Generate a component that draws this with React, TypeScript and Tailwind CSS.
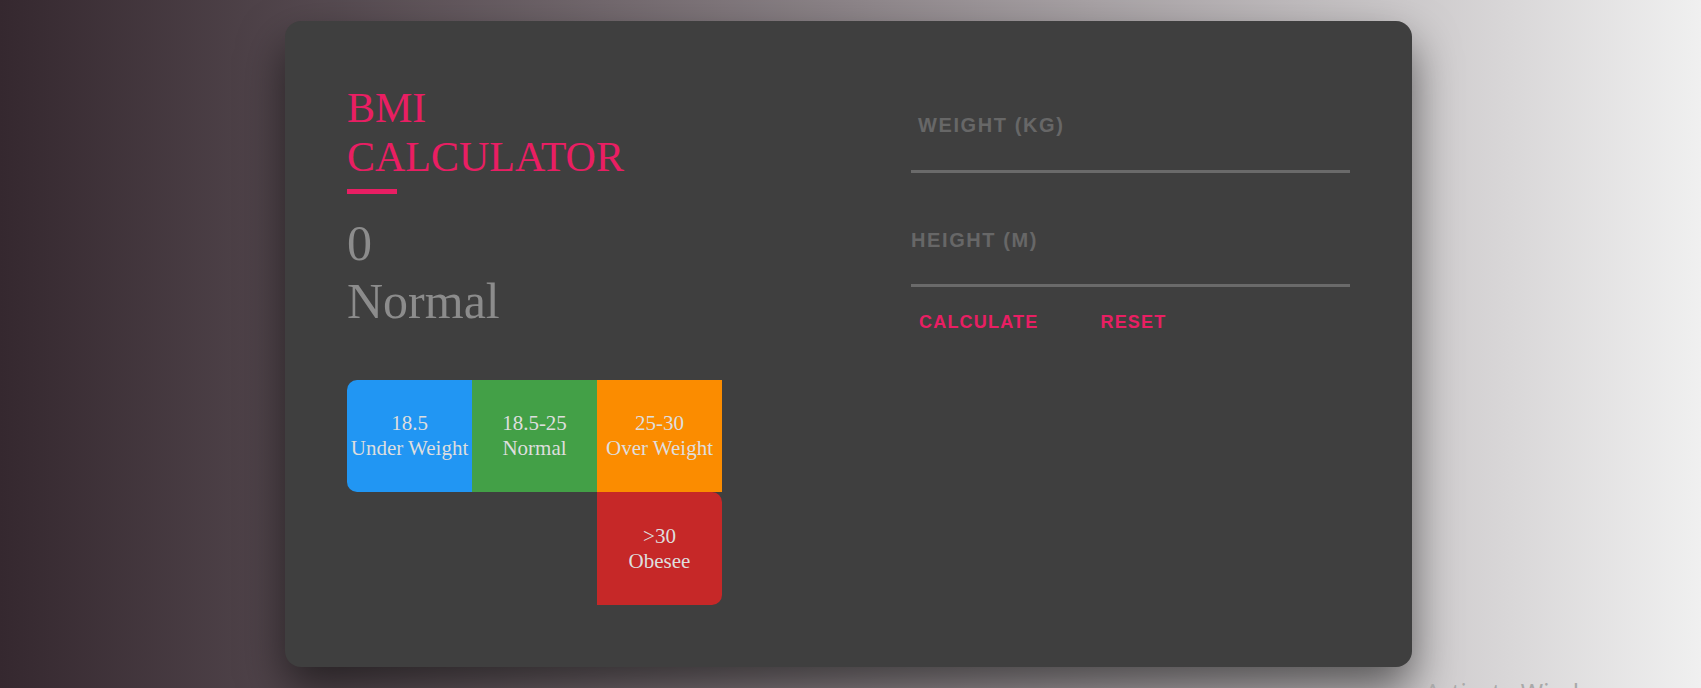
import { useState } from 'react';

const ranges = [
  { range: '18.5', label: 'Under Weight', className: 'bg-[#2196f3] rounded-l-[10px]' },
  { range: '18.5-25', label: 'Normal', className: 'bg-[#43a047]' },
  { range: '25-30', label: 'Over Weight', className: 'bg-[#fb8c00]' },
  { range: '>30', label: 'Obesee', className: 'bg-[#c62828] rounded-r-[10px] col-start-3 h-[113px]' },
];

export default function App() {
  const [weight, setWeight] = useState('');
  const [height, setHeight] = useState('');
  const [bmi, setBmi] = useState(0);
  const [status, setStatus] = useState('Normal');

  const calculate = () => {
    const w = parseFloat(weight);
    const h = parseFloat(height);
    if (!w || !h) return;
    const value = Math.round((w / (h * h)) * 10) / 10;
    setBmi(value);
    if (value < 18.5) setStatus('Under Weight');
    else if (value < 25) setStatus('Normal');
    else if (value < 30) setStatus('Over Weight');
    else setStatus('Obesee');
  };

  const reset = () => {
    setWeight('');
    setHeight('');
    setBmi(0);
    setStatus('Normal');
  };

  return (
    <div className="relative h-[688px] overflow-hidden bg-gradient-to-r from-[#35282f] to-[#f0f0f0] flex items-center justify-center pr-[4px]">
      <div className="w-[1127px] h-[646px] bg-[#3f3f3f] rounded-[16px] shadow-[0_22px_45px_rgba(0,0,0,0.55)] px-[62px] pt-[63px] flex">
        {/* left side */}
        <div className="flex-1 font-['Liberation_Serif',serif]">
          <h1 className="text-[42px] leading-[49px] text-[#e91e63] font-normal">
            BMI
            <br />
            CALCULATOR
          </h1>
          <div className="mt-[7px] w-[50px] h-[5px] bg-[#e91e63]" />
          <div className="mt-[20px] text-[50px] leading-[58px] text-[#8c8c8c]">
            <div>{bmi}</div>
            <div>{status}</div>
          </div>
          <div className="mt-[50px] grid grid-cols-[125px_125px_125px]">
            {ranges.map((r) => (
              <div
                key={r.label}
                className={`h-[112px] flex flex-col items-center justify-center text-[21px] leading-[25px] text-[#dedede] ${r.className}`}
              >
                <span>{r.range}</span>
                <span className="whitespace-nowrap">{r.label}</span>
              </div>
            ))}
          </div>
        </div>

        {/* right side */}
        <div className="w-[439px] mt-[30px] font-['Liberation_Sans',Arial,sans-serif]">
          <div>
            <label className="block pl-[7px] text-[20px] leading-[23px] font-bold tracking-[1.6px] text-[#676767]">
              WEIGHT (KG)
            </label>
            <input
              value={weight}
              onChange={(e) => setWeight(e.target.value)}
              className="block w-full h-[36px] bg-transparent border-b-[3px] border-[#6a6a6a] outline-none text-[#cfcfcf] text-[18px]"
            />
          </div>
          <div className="mt-[56px]">
            <label className="block text-[20px] leading-[23px] font-bold tracking-[1.6px] text-[#676767]">
              HEIGHT (M)
            </label>
            <input
              value={height}
              onChange={(e) => setHeight(e.target.value)}
              className="block w-full h-[35px] bg-transparent border-b-[3px] border-[#6a6a6a] outline-none text-[#cfcfcf] text-[18px]"
            />
          </div>
          <div className="mt-[25px] flex gap-[46px]">
            <button
              onClick={calculate}
              className="px-[8px] text-[18px] leading-[21px] font-bold tracking-[1.2px] text-[#e91e63]"
            >
              CALCULATE
            </button>
            <button
              onClick={reset}
              className="px-[8px] text-[18px] leading-[21px] font-bold tracking-[1.2px] text-[#e91e63]"
            >
              RESET
            </button>
          </div>
        </div>
      </div>

      <span className="absolute left-[1425px] top-[678px] text-[24px] leading-[28px] text-[#a9a9a9] font-['Noto_Sans',sans-serif] whitespace-nowrap">
        Activate Windows
      </span>
    </div>
  );
}
